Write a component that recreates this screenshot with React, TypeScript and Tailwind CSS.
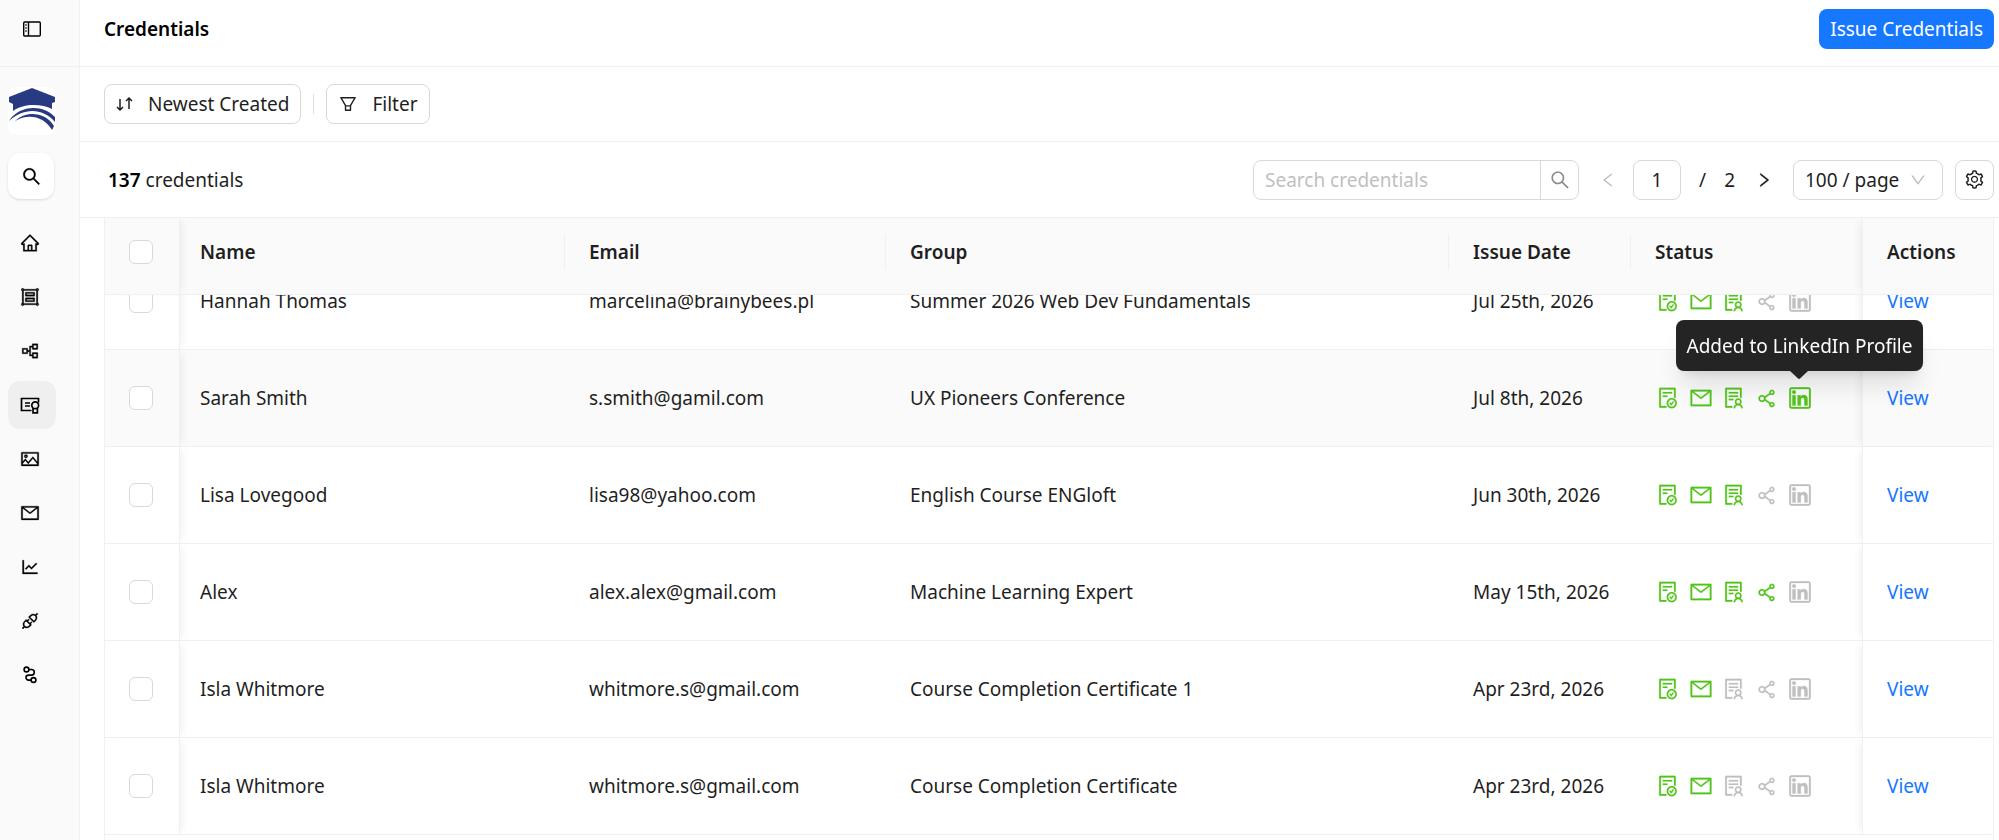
import { useLayoutEffect, useRef } from "react";
import {
  AiOutlineApi,
  AiOutlineDown,
  AiOutlineFileDone,
  AiOutlineFilter,
  AiOutlineGroup,
  AiOutlineHome,
  AiOutlineLeft,
  AiOutlineLineChart,
  AiOutlineLinkedin,
  AiOutlineMail,
  AiOutlinePartition,
  AiOutlinePicture,
  AiOutlineRight,
  AiOutlineSearch,
  AiOutlineSetting,
  AiOutlineShareAlt,
  AiOutlineSolution,
} from "react-icons/ai";
import clsx from "clsx";

type IconProps = { size?: number; strokeWidth?: number };

const navItems = [
  { label: "Home", icon: AiOutlineHome },
  { label: "Groups", icon: AiOutlineGroup },
  { label: "Pathways", icon: AiOutlinePartition },
  { label: "Credentials", icon: CertificateIcon, active: true },
  { label: "Designs", icon: AiOutlinePicture },
  { label: "Emails", icon: AiOutlineMail },
  { label: "Analytics", icon: AiOutlineLineChart },
  { label: "Integrations", icon: AiOutlineApi },
  { label: "Automations", icon: RouteIcon },
];

const statusSteps = [
  { label: "Issued", icon: AiOutlineFileDone, size: 24 },
  { label: "Email delivered", icon: AiOutlineMail, size: 24 },
  { label: "Viewed", icon: AiOutlineSolution, size: 24 },
  { label: "Shared", icon: AiOutlineShareAlt, size: 23 },
  { label: "Added to LinkedIn Profile", icon: LinkedinIcon, size: 22 },
];

// status flags follow the order of statusSteps
const credentials = [
  { id: 1, name: "Hannah Thomas", email: "marcelina@brainybees.pl", group: "Summer 2026 Web Dev Fundamentals", date: "Jul 25th, 2026", status: [1, 1, 1, 0, 0] },
  { id: 2, name: "Sarah Smith", email: "s.smith@gamil.com", group: "UX Pioneers Conference", date: "Jul 8th, 2026", status: [1, 1, 1, 1, 1], hovered: true },
  { id: 3, name: "Lisa Lovegood", email: "lisa98@yahoo.com", group: "English Course ENGloft", date: "Jun 30th, 2026", status: [1, 1, 1, 0, 0] },
  { id: 4, name: "Alex", email: "alex.alex@gmail.com", group: "Machine Learning Expert", date: "May 15th, 2026", status: [1, 1, 1, 1, 0] },
  { id: 5, name: "Isla Whitmore", email: "whitmore.s@gmail.com", group: "Course Completion Certificate 1", date: "Apr 23rd, 2026", status: [1, 1, 0, 0, 0] },
  { id: 6, name: "Isla Whitmore", email: "whitmore.s@gmail.com", group: "Course Completion Certificate", date: "Apr 23rd, 2026", status: [1, 1, 0, 0, 0] },
];

const columns = ["Name", "Email", "Group", "Issue Date", "Status"];

// the outline glyph sits in a slightly rounded frame
function LinkedinIcon({ size = 22 }: IconProps) {
  return (
    <span className="flex items-center justify-center overflow-hidden rounded-[3px]">
      <AiOutlineLinkedin size={size} viewBox="104 104 816 816" strokeWidth={10} />
    </span>
  );
}

function CertificateIcon({ size = 20 }: IconProps) {
  return (
    <svg width={size} height={size} viewBox="0 0 20 20" fill="none" stroke="currentColor" strokeWidth="1.7">
      <path d="M11.5 15.5H1.5V3.5h17v4" />
      <path d="M5 8h5M5 11h5" />
      <circle cx="15.2" cy="10.3" r="3.4" />
      <path d="M13 13v4.8h4.4V13" />
    </svg>
  );
}

function RouteIcon({ size = 20 }: IconProps) {
  return (
    <svg width={size} height={size} viewBox="0 0 20 20" fill="none" stroke="currentColor" strokeWidth="1.6">
      <circle cx="6.5" cy="4.5" r="2.4" />
      <circle cx="13.5" cy="15" r="2.4" />
      <path d="M9 4.5h2.5a2.8 2.8 0 0 1 0 5.6h-3a2.5 2.5 0 0 0 0 5H11" />
    </svg>
  );
}

function SidebarIcon() {
  return (
    <svg width="18" height="16" viewBox="0 0 18 16" fill="none" stroke="currentColor" strokeWidth="1.4">
      <rect x="0.7" y="1" width="16.6" height="14" rx="1" />
      <path d="M5.5 1v14" />
      <path d="M2 4h2M2 7h2M2 10h2" strokeWidth="1" />
    </svg>
  );
}

function SortIcon() {
  return (
    <svg width="18" height="16" viewBox="0 0 18 16" fill="none" stroke="currentColor" strokeWidth="1.5">
      <path d="M4 3v11M1 11l3 3 3-3M13 13V2M10 5l3-3 3 3" />
    </svg>
  );
}

function Logo() {
  return (
    <svg width="48" height="46" viewBox="0 0 48 46" fill="#273a82">
      <path d="M24 0 47 9v5l-3 1v6C34 16 16 15 5 23v-7l-4-2V9z" />
      <path d="M1 33C10 18 34 15 47 29v5C34 19 15 20 1 33z" />
      <path d="M7 33C18 22 38 24 46 38l-2 4C36 28 20 25 7 33z" />
    </svg>
  );
}

function Checkbox({ label }: { label: string }) {
  return (
    <input
      type="checkbox"
      aria-label={label}
      className="block size-6 appearance-none rounded-md border border-[#d9d9d9] bg-white checked:border-[#1677ff] checked:bg-[#1677ff]"
    />
  );
}

function Sidebar() {
  return (
    <aside className="flex w-20 shrink-0 flex-col border-r border-[#f0f0f0] bg-[#fafafa] text-black">
      <div className="flex h-[67px] shrink-0 items-center border-b border-[#f0f0f0] pb-2 pl-[23px]">
        <button type="button" aria-label="Toggle sidebar">
          <SidebarIcon />
        </button>
      </div>
      <div className="flex flex-col pl-2 pt-5">
        <a href="#" aria-label="Organization" className="flex size-12 items-center justify-center rounded-lg bg-white">
          <Logo />
        </a>
        <button
          type="button"
          aria-label="Search"
          className="mt-[18px] flex size-[46px] items-center justify-center rounded-xl bg-white shadow-sm"
        >
          <AiOutlineSearch size={21} strokeWidth={16} />
        </button>
      </div>
      <nav className="mt-5 flex flex-col gap-[6px] pl-2">
        {navItems.map((item) => (
          <a
            key={item.label}
            href="#"
            aria-label={item.label}
            className={clsx(
              "flex size-12 items-center justify-center rounded-xl pr-1",
              item.active && "bg-[#efefef]",
            )}
          >
            <item.icon size={20} strokeWidth={16} />
          </a>
        ))}
      </nav>
    </aside>
  );
}

function Toolbar() {
  return (
    <div className="flex h-[76px] shrink-0 items-center border-b border-[#f0f0f0] pl-7 pr-[5px]">
      <p>
        <strong className="font-semibold text-black">137</strong> credentials
      </p>
      <div className="ml-auto flex items-center">
        <form className="flex h-10 w-[326px] overflow-hidden rounded-lg border border-[#d9d9d9]">
          <input
            type="text"
            aria-label="Search credentials"
            placeholder="Search credentials"
            className="min-w-0 flex-1 px-[11px] outline-none placeholder:text-[#bfbfbf]"
          />
          <button
            type="button"
            aria-label="Submit search"
            className="flex w-[38px] items-center justify-center border-l border-[#d9d9d9] text-[#8c8c8c]"
          >
            <AiOutlineSearch size={22} />
          </button>
        </form>
        <button type="button" aria-label="Previous page" disabled className="ml-5 text-[#bfbfbf]">
          <AiOutlineLeft size={18} />
        </button>
        <input
          type="text"
          aria-label="Page"
          defaultValue="1"
          className="ml-4 h-10 w-12 rounded-lg border border-[#d9d9d9] text-center"
        />
        <span className="ml-[18px]">/</span>
        <span className="ml-[18px]">2</span>
        <button type="button" aria-label="Next page" className="ml-5">
          <AiOutlineRight size={18} strokeWidth={16} />
        </button>
        <div className="relative ml-5">
          <select
            aria-label="Page size"
            className="block h-10 w-[150px] appearance-none rounded-lg border border-[#d9d9d9] bg-white px-[11px]"
          >
            <option>100 / page</option>
            <option>50 / page</option>
          </select>
          <AiOutlineDown size={18} className="pointer-events-none absolute right-4 top-[11px] text-[#bfbfbf]" />
        </div>
        <button
          type="button"
          aria-label="Table settings"
          className="ml-3 flex h-10 w-[39px] items-center justify-center rounded-lg border border-[#d9d9d9]"
        >
          <AiOutlineSetting size={21} />
        </button>
      </div>
    </div>
  );
}

function Status({ status, hovered }: { status: number[]; hovered?: boolean }) {
  return (
    <div className="-ml-1 flex items-center">
      {statusSteps.map((step, i) => (
        <span
          key={step.label}
          className={clsx(
            "relative flex w-[33px] justify-center",
            status[i] ? "text-[#52c41a]" : "text-[#bfbfbf]",
          )}
        >
          <step.icon size={step.size} strokeWidth={8} />
          {hovered && i === statusSteps.length - 1 && (
            <span
              role="tooltip"
              className="absolute bottom-full left-1/2 z-20 mb-4 flex h-[51px] -translate-x-1/2 items-center whitespace-nowrap rounded-lg bg-[#242424] px-[11px] text-white shadow-xl"
            >
              {step.label}
              <svg
                width="18"
                height="8"
                viewBox="0 0 18 8"
                className="absolute left-1/2 top-full -translate-x-1/2 text-[#242424]"
              >
                <path d="M0 0h18l-8 7.500q-1 .8-2 0z" fill="currentColor" />
              </svg>
            </span>
          )}
        </span>
      ))}
    </div>
  );
}

function CredentialsTable() {
  const scroller = useRef<HTMLDivElement>(null);

  useLayoutEffect(() => {
    if (scroller.current) scroller.current.scrollTop = 42;
  }, []);

  return (
    <div ref={scroller} className="min-h-0 flex-1 overflow-y-auto pl-6 pr-[5px] [scrollbar-width:none]">
      <div className="border-x border-[#f0f0f0] pb-12">
        <table className="w-full table-fixed border-separate border-spacing-0">
          <colgroup>
            <col className="w-[75px]" />
            <col className="w-[385px]" />
            <col className="w-[321px]" />
            <col />
            <col className="w-[182px]" />
            <col className="w-[231px]" />
            <col className="w-[131px]" />
          </colgroup>
          <thead className="sticky top-0 z-10">
            <tr className="h-[77px] bg-[#fafafa] text-left">
              <th className="border-b border-r border-[#f0f0f0] pb-2 pl-6 shadow-[6px_0_8px_-4px_#00000010]">
                <Checkbox label="Select all credentials" />
              </th>
              {columns.map((column, i) => (
                <th key={column} className="border-b border-[#f0f0f0] pb-2 font-semibold">
                  <div
                    className={clsx(
                      "flex h-9 items-center",
                      i === 0 ? "pl-5" : "pl-6",
                      i < 4 && "border-r border-[#f0f0f0]",
                    )}
                  >
                    {column}
                  </div>
                </th>
              ))}
              <th className="border-b border-l border-[#f0f0f0] pb-2 pl-6 font-semibold shadow-[-6px_0_8px_-4px_#00000010]">
                Actions
              </th>
            </tr>
          </thead>
          <tbody>
            {credentials.map((c) => (
              <tr key={c.id} className={clsx("h-[97px]", c.hovered ? "bg-[#fafafa]" : "bg-white")}>
                <td className="border-b border-r border-[#f0f0f0] pl-6 shadow-[6px_0_8px_-4px_#00000010]">
                  <Checkbox label={`Select ${c.name}`} />
                </td>
                <td className="border-b border-[#f0f0f0] pl-5">{c.name}</td>
                <td className="border-b border-[#f0f0f0] pl-6">{c.email}</td>
                <td className="border-b border-[#f0f0f0] pl-6">{c.group}</td>
                <td className="border-b border-[#f0f0f0] pl-6">{c.date}</td>
                <td className="border-b border-[#f0f0f0] pl-6">
                  <Status status={c.status} hovered={c.hovered} />
                </td>
                <td className="border-b border-l border-[#f0f0f0] pl-6 shadow-[-6px_0_8px_-4px_#00000010]">
                  <a href="#" className="text-[#1677ff]">
                    View
                  </a>
                </td>
              </tr>
            ))}
          </tbody>
        </table>
      </div>
    </div>
  );
}

export default function App() {
  return (
    <div className="flex h-screen overflow-hidden bg-white font-['Noto_Sans',sans-serif] text-[19px] leading-6 text-[#1f1f1f]">
      <Sidebar />
      <main className="flex min-w-0 flex-1 flex-col">
        <header className="flex h-[67px] shrink-0 items-center justify-between border-b border-[#f0f0f0] pb-2 pl-6 pr-[5px]">
          <h1 className="font-semibold text-black">Credentials</h1>
          <button type="button" className="h-10 rounded-lg bg-[#1677ff] px-[11px] text-white">
            Issue Credentials
          </button>
        </header>
        <div className="flex h-[75px] shrink-0 items-center border-b border-[#f0f0f0] pl-6">
          <button type="button" className="flex h-10 items-center gap-[14px] rounded-lg border border-[#d9d9d9] px-[11px]">
            <SortIcon />
            Newest Created
          </button>
          <span className="mx-3 h-5 w-px bg-[#e0e0e0]" />
          <button type="button" className="flex h-10 items-center gap-[14px] rounded-lg border border-[#d9d9d9] px-[11px]">
            <AiOutlineFilter size={20} />
            Filter
          </button>
        </div>
        <Toolbar />
        <CredentialsTable />
      </main>
    </div>
  );
}
